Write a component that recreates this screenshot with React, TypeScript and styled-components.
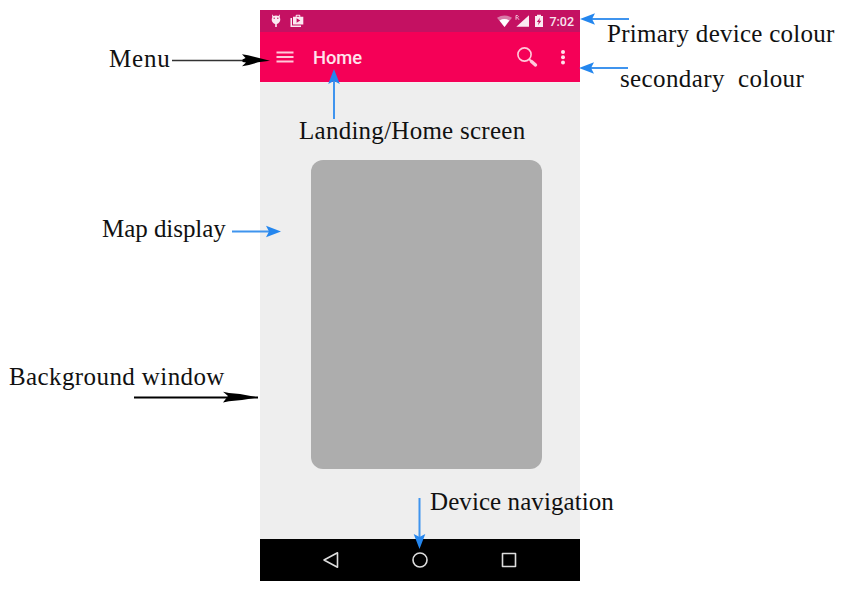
import React from 'react';
import styled, { createGlobalStyle } from 'styled-components';

const GlobalStyle = createGlobalStyle`
  body { margin: 0; background: #fff; }
`;

const Page = styled.main`
  position: relative;
  box-sizing: border-box;
  width: 847px;
  height: 589px;
  padding: 10px 0 0 260px;
  overflow: hidden;
`;

const Phone = styled.section`
  display: flex;
  flex-direction: column;
  width: 320px;
  height: 571px;
  background: #eee;
  font-family: Roboto, sans-serif;
  color: #fff;
`;

const StatusBar = styled.div`
  display: flex;
  align-items: center;
  justify-content: space-between;
  box-sizing: border-box;
  height: 22px;
  padding: 0 6px 0 10px;
  background: #c41162;
`;

const IconGroup = styled.div<{ $gap: number }>`
  display: flex;
  align-items: center;
  gap: ${(p) => p.$gap}px;
`;

const Clock = styled.span`
  font-size: 12.5px;
  font-weight: 500;
  line-height: 22px;
  margin-top: 1px;
  color: #f8e4ee;
`;

const AppBar = styled.header`
  display: flex;
  align-items: center;
  box-sizing: border-box;
  height: 50px;
  padding: 0 14px 0 16px;
  background: #f50057;
`;

const Title = styled.h1`
  flex: 1;
  margin: 2px 0 0 19px;
  font-size: 18.4px;
  font-weight: 500;
  line-height: 24px;
  letter-spacing: -0.1px;
  color: #ffe3ec;
`;

const Content = styled.div`
  flex: 1;
  display: flex;
  justify-content: center;
  align-items: flex-start;
  padding: 77px 0 0 13px;
  border-top: 1px solid #f6eef1;
`;

const MapCard = styled.div`
  width: 231px;
  height: 309px;
  border-radius: 12px;
  background: #adadad;
`;

const NavBar = styled.nav`
  display: flex;
  align-items: center;
  justify-content: space-between;
  box-sizing: border-box;
  height: 42px;
  padding: 0 62px;
  background: #000;
`;

const Icon = styled.svg`
  display: block;
  flex: none;
`;

const Arrows = styled.svg`
  position: absolute;
  inset: 0;
`;

const Label = styled.span<{ $x: number; $base: number; $spacing: number }>`
  position: absolute;
  left: ${(p) => p.$x}px;
  top: ${(p) => p.$base - 23}px;
  font-family: 'Liberation Serif', serif;
  font-size: 25px;
  line-height: 30px;
  letter-spacing: ${(p) => p.$spacing}px;
  white-space: pre;
  color: #111;
`;

const labels = [
  { text: 'Menu', x: 109, base: 67, spacing: 0.8 },
  { text: 'Primary device colour', x: 607, base: 42, spacing: 0.26 },
  { text: 'secondary  colour', x: 620, base: 87, spacing: 0.38 },
  { text: 'Landing/Home screen', x: 299, base: 139, spacing: 0.26 },
  { text: 'Map display', x: 102, base: 237, spacing: -0.05 },
  { text: 'Background window', x: 9, base: 385, spacing: 0.4 },
  { text: 'Device navigation', x: 430, base: 510, spacing: 0.08 },
];

const blueArrows = [
  { x: 580, y: 19, angle: 180, length: 49 },
  { x: 579, y: 68, angle: 180, length: 49 },
  { x: 334, y: 69, angle: -90, length: 50 },
  { x: 281, y: 231.5, angle: 0, length: 49 },
  { x: 419.5, y: 549, angle: 90, length: 51 },
];

export default function App() {
  return (
    <>
      <GlobalStyle />
      <Page>
        <Phone>
          <StatusBar>
            <IconGroup $gap={8}>
              <Icon width="12" height="16" viewBox="0 0 12 16" fill="#fbeaf2">
                <path d="M2 1.2 3.5 3C4.8 2.3 7.2 2.3 8.5 3L10 1.2 9.7 4.2C11.4 7.5 9 10.6 6.8 11V14H5.2V11C3 10.6.6 7.5 2.3 4.2Z" />
                <circle cx="4.2" cy="5.3" r=".7" fill="#c41162" />
                <circle cx="7.8" cy="5.3" r=".7" fill="#c41162" />
              </Icon>
              <Icon width="14" height="14" viewBox="0 0 14 14" fill="#fbeaf2">
                <path d="M.5 4H2V11.5H11V13H.5Z" />
                <path fillRule="evenodd" d="M3 2.8H5.7V1.6Q5.7.7 6.6.7H9.4Q10.3.7 10.3 1.6V2.8H13.3V10.5H3ZM6.7 2.8H9.3V1.7H6.7ZM6.6 4.3V8.8L10.3 6.5Z" />
              </Icon>
            </IconGroup>
            <IconGroup $gap={5}>
              <Icon width="32" height="14" viewBox="0 0 32 14">
                <path d="M0 3.8Q7.5-1 15 3.8L7.5 13Z" fill="#d87aa6" />
                <path d="M2.5 6.5Q7.5 3.6 12.3 6.5L7.5 13Z" fill="#fff" />
                <path d="M19.3 12.8H32V1.2Z" fill="#fbeaf2" />
                <path d="M19 5.8V1.5H20.5Q22.4 2.6 20.5 3.7H19M20.5 3.7 22 5.8" fill="none" stroke="#efb9d2" strokeWidth="1" />
              </Icon>
              <Icon width="10" height="14" viewBox="0 0 10 14">
                <path d="M1 2H3V.7H7V2H9V13H1Z" fill="#fbeaf2" />
                <path d="M6 3.7 2.8 8H4.7L4 11.2 7.3 6.7H5.3Z" fill="#c41162" />
              </Icon>
              <Clock>7:02</Clock>
            </IconGroup>
          </StatusBar>
          <AppBar>
            <Icon width="18" height="14" viewBox="0 0 18 14" stroke="#ffc9da" strokeWidth="1.9">
              <path d="M.5 2.5H17.5M.5 7H17.5M.5 11.5H17.5" />
            </Icon>
            <Title>Home</Title>
            <IconGroup $gap={22}>
              <Icon width="22" height="22" viewBox="0 0 22 22" fill="none" stroke="#ffc9da">
                <circle cx="8.5" cy="8.5" r="6.6" strokeWidth="1.6" />
                <path d="M13 13 15.5 15.5" strokeWidth="1.8" />
                <path d="M15.5 15.5 19.5 19" strokeWidth="3.4" strokeLinecap="round" />
              </Icon>
              <Icon width="6" height="18" viewBox="0 0 6 18" fill="#ffe0ea">
                <circle cx="3" cy="4" r="2" />
                <circle cx="3" cy="9.3" r="2" />
                <circle cx="3" cy="14.6" r="2" />
              </Icon>
            </IconGroup>
          </AppBar>
          <Content>
            <MapCard />
          </Content>
          <NavBar>
            <Icon width="18" height="18" viewBox="0 0 18 18" fill="none" stroke="#ddd" strokeWidth="1.6" strokeLinejoin="round">
              <path d="M2 9 15.5 1.8V16.2Z" />
            </Icon>
            <Icon width="18" height="18" viewBox="0 0 18 18" fill="none" stroke="#ddd" strokeWidth="1.6">
              <circle cx="9" cy="9" r="7" />
            </Icon>
            <Icon width="18" height="18" viewBox="0 0 18 18" fill="none" stroke="#ddd" strokeWidth="1.6" strokeLinejoin="round">
              <path d="M2.5 2.5H15.5V15.5H2.5Z" />
            </Icon>
          </NavBar>
        </Phone>
        <Arrows width="847" height="589" viewBox="0 0 847 589">
          {blueArrows.map((a) => (
            <g key={`${a.x}-${a.y}`} transform={`translate(${a.x} ${a.y}) rotate(${a.angle})`}>
              <path d={`M${-a.length} 0H-9`} stroke="#3f94ee" strokeWidth="2" />
              <path d="M0 0-15-5.8-12 0-15 5.8Z" fill="#2486ee" />
            </g>
          ))}
          <path d="M172 60.5H250" stroke="#333" strokeWidth="1.5" />
          <path d="M270 60.7 248 55.3 242 54.2 245.5 58 242.5 59.5V62L246 62.6 242 66.3 249 65 258 62.3Z" fill="#000" />
          <path d="M134 397.5H258" stroke="#000" strokeWidth="2" />
          <path d="M258 397.5 240 394 229 393 223 391.8 228 396 223 402.5 229 401.3 242 400Z" fill="#000" />
        </Arrows>
        {labels.map((l) => (
          <Label key={l.text} $x={l.x} $base={l.base} $spacing={l.spacing}>
            {l.text}
          </Label>
        ))}
      </Page>
    </>
  );
}
